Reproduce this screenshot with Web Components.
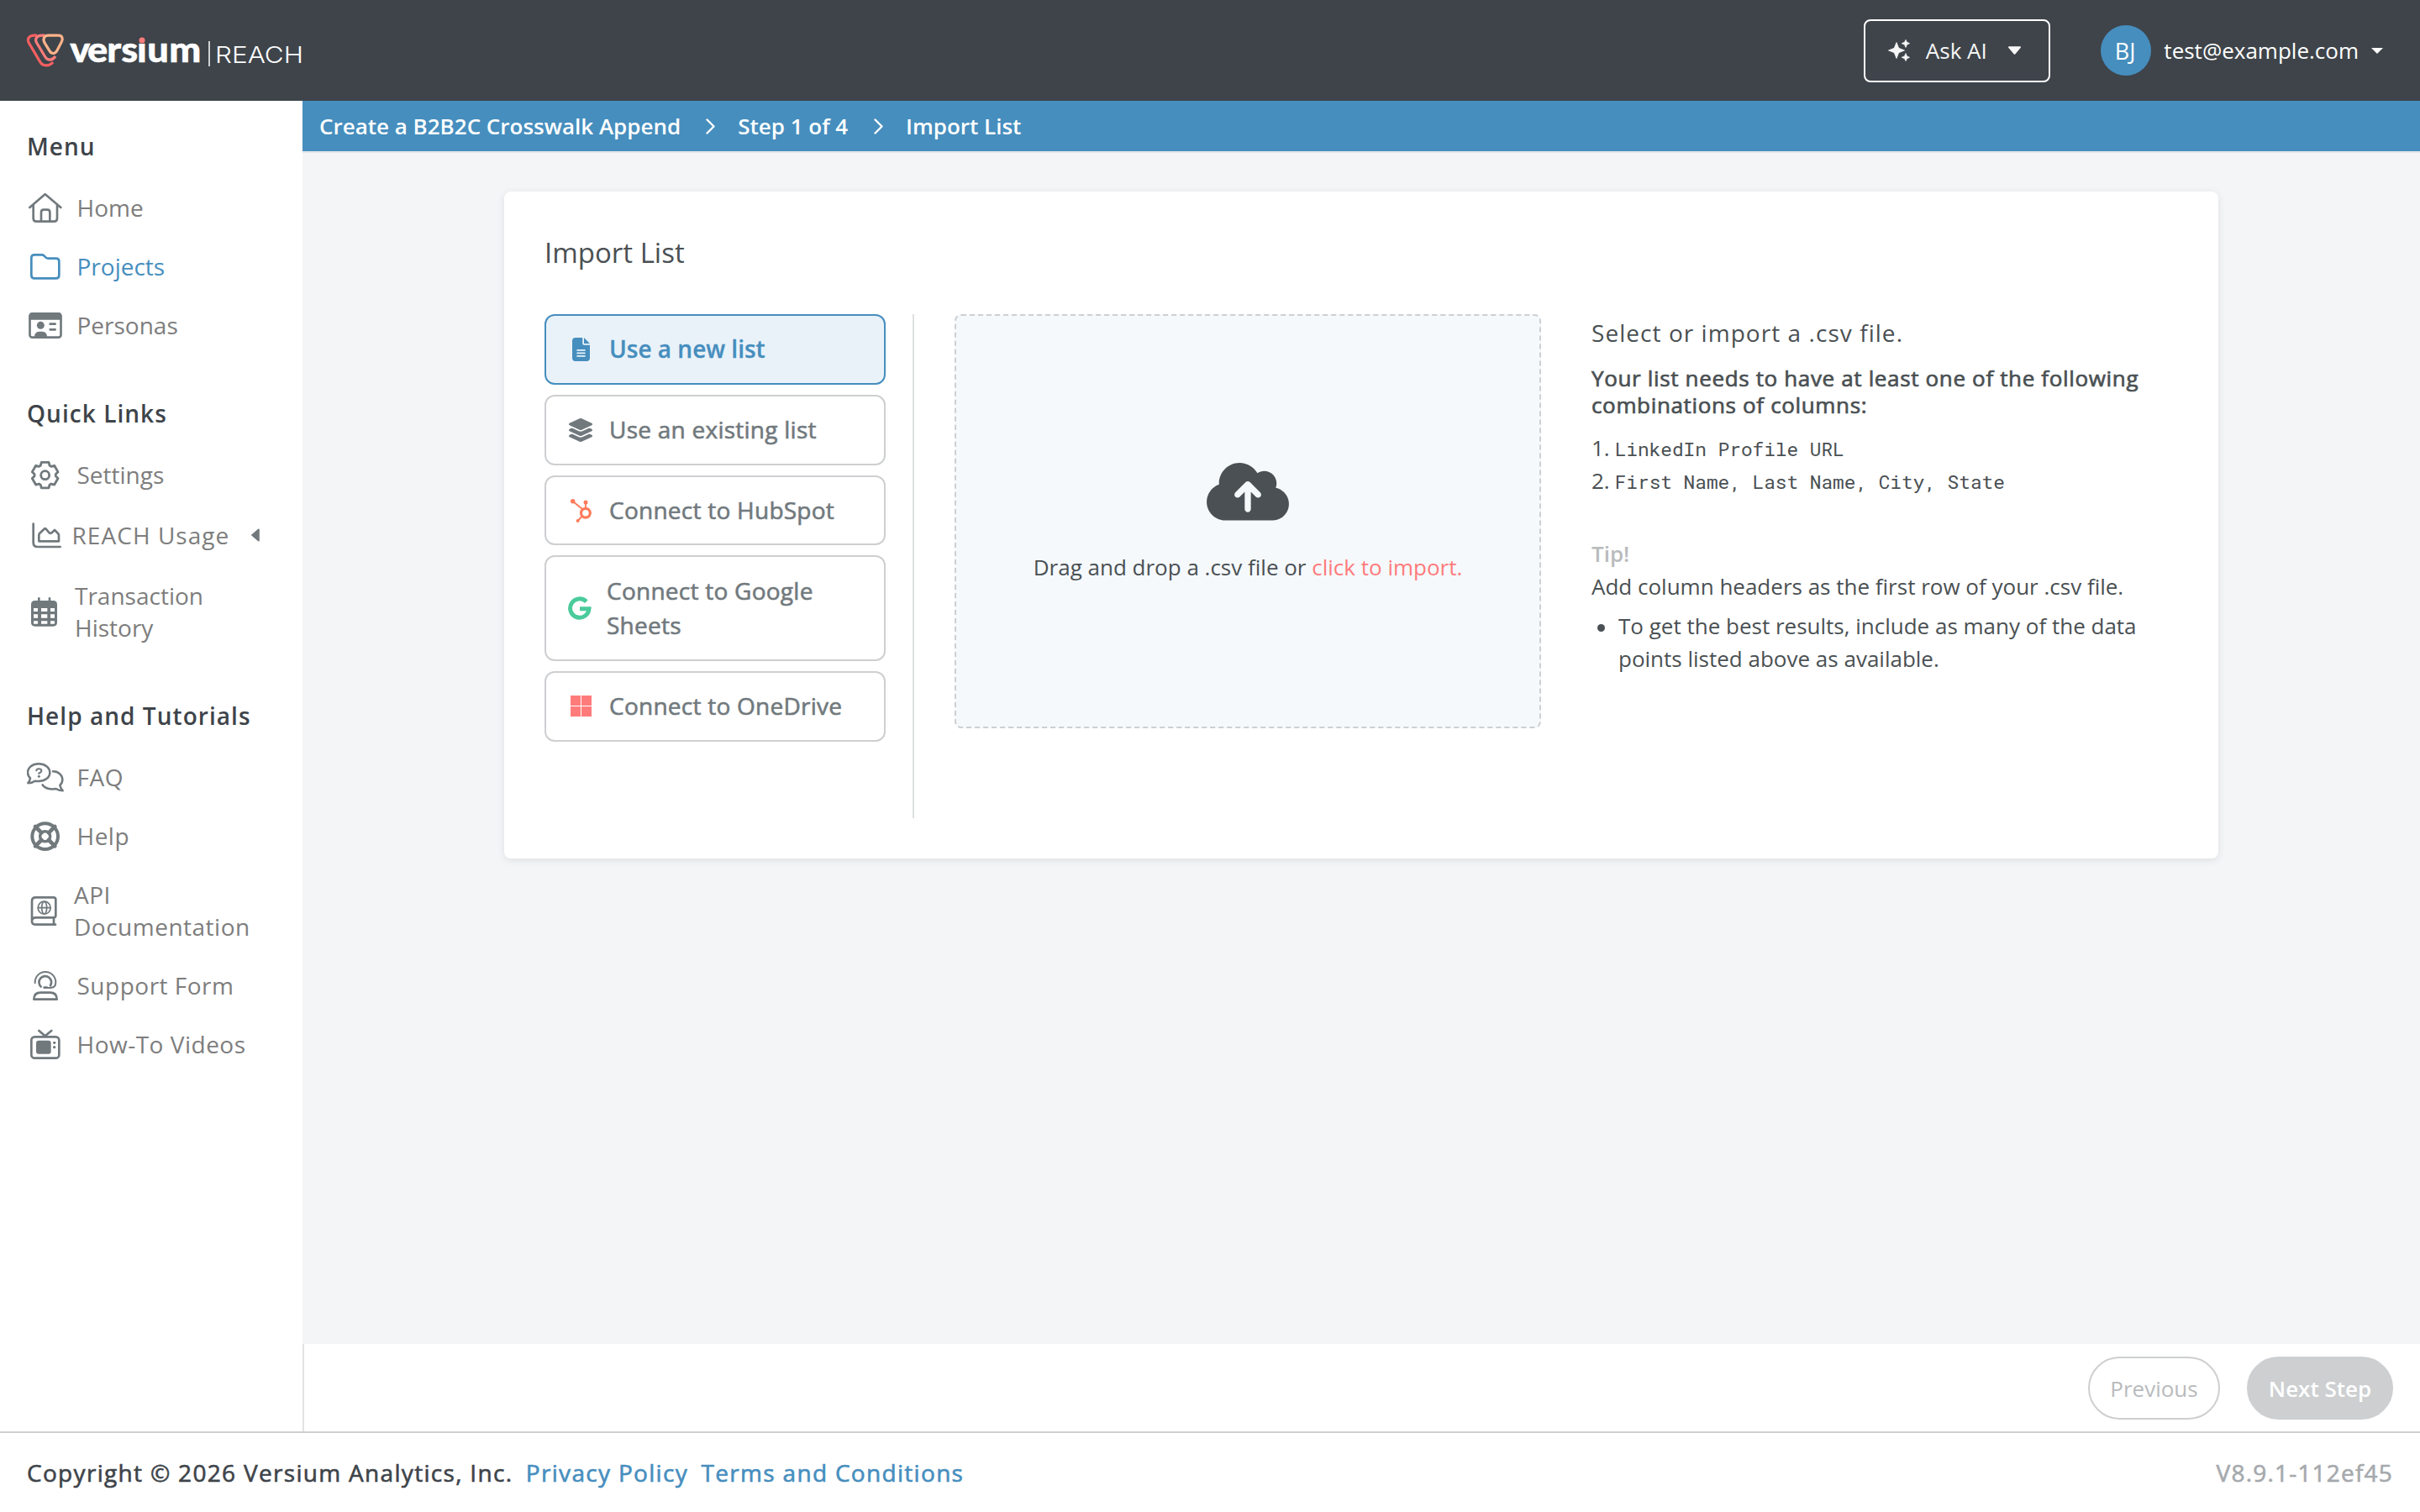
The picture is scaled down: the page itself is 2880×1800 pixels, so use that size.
<!DOCTYPE html>
<html lang="en">
<head>
<meta charset="utf-8">
<title>Import List</title>
<style>
html,body{margin:0;height:100%}
body{font-family:"Open Sans",sans-serif;color:#4a5053;background:#f4f5f7;overflow:hidden}
</style>
</head>
<body>
<reach-app></reach-app>
<script>
const gear=(cx,cy)=>{let p=[];for(let i=0;i<6;i++){const t=-90+i*60;for(const [d,r] of [[-25,38],[-16,47.5],[16,47.5],[25,38]]){const a=(t+d)*Math.PI/180;p.push((cx+r*Math.cos(a)).toFixed(1)+' '+(cy+r*Math.sin(a)).toFixed(1));}}return 'M'+p.join('L')+'Z';};
const ICONS={
home:['96 675 132 132','<g fill="none" stroke="currentColor" stroke-width="8" stroke-linecap="round" stroke-linejoin="round"><path d="M106 741L158 696Q161 693 164 696L217 741M119 733V780Q119 791 130 791H193Q204 791 204 780V733M147 790V758Q147 749 156 749H169Q178 749 178 758V790"/></g>'],
folder:['96 885 132 132','<path fill="none" stroke="currentColor" stroke-width="8" stroke-linejoin="round" d="M123 910H149Q154 910 157 913L164 920Q167 923 172 923H200Q211 923 211 934V983Q211 994 200 994H123Q112 994 112 983V921Q112 910 123 910Z"/>'],
persona:['96 1095 132 132','<rect x="106.500" y="1120" width="111" height="85" rx="9" fill="none" stroke="currentColor" stroke-width="8"/><path fill="currentColor" d="M104 1142V1128Q104 1117 115 1117H209Q220 1117 220 1128V1142ZM123 1205Q123 1184 140 1184H151Q168 1184 168 1205Z"/><circle cx="145" cy="1162" r="13.500" fill="currentColor"/><path d="M179 1157H197M179 1177H197" stroke="currentColor" stroke-width="8" stroke-linecap="round"/>'],
gear:['96 309 132 132','<g fill="none" stroke="currentColor" stroke-width="8.500" stroke-linejoin="round"><path d="'+gear(161,377)+'"/><circle cx="161" cy="377" r="15"/></g>'],
chart:['96 525 132 132','<g fill="none" stroke="currentColor" stroke-width="8" stroke-linecap="round" stroke-linejoin="round"><path d="M119 551V618Q119 633 134 633H215M139 591V613H210V592Q210 588 207 585L195 573L183 584Q179 586 176 583L164 569Q161 566 158 569L142 584Q139 587 139 591Z"/></g>'],
calendar:['96 798 132 132','<path fill="currentColor" fill-rule="evenodd" d="M125 825H190Q204 825 204 839V903Q204 917 190 917H125Q111 917 111 903V839Q111 825 125 825ZM120 852V864H135V852ZM147 852V864H169V852ZM180 852V864H195V852ZM120 874V887H135V874ZM147 874V887H169V874ZM180 874V887H195V874ZM120 898V908H135V898ZM147 898V908H169V898ZM180 898V908H195V898Z"/><path d="M139 817V830M177 817V830" stroke="currentColor" stroke-width="8" stroke-linecap="round"/>'],
faq:['96 279 132 132','<g fill="none" stroke="currentColor" stroke-width="7.500" stroke-linecap="round" stroke-linejoin="round"><path d="M108 349C102 343 99 336 99 329C99 311 116 298 138 298C160 298 178 311 178 329C178 347 160 360 138 360C133 360 129 360 125 359Q114 367 100 367Q107 358 108 349Z"/><path d="M189 325C210 325 223 340 223 355C223 363 220 369 214 375Q217 386 224 394Q209 393 200 387C180 391 160 386 152 373"/></g><path d="M130 322Q131 316 138 316Q148 316 148 323Q148 328 139 331V333" fill="none" stroke="currentColor" stroke-width="6" stroke-linecap="round" stroke-linejoin="round"/><circle cx="139" cy="343" r="4.500" fill="currentColor"/>'],
help:['96 489 132 132','<g fill="none" stroke="currentColor"><circle cx="161" cy="557" r="46" stroke-width="12"/><circle cx="161" cy="557" r="18" stroke-width="10.500"/><path d="M126 522L148 544M196 522L174 544M126 592L148 570M196 592L174 570" stroke-width="14" stroke-linecap="round"/></g>'],
book:['96 756 132 132','<g fill="none" stroke="currentColor" stroke-linecap="round" stroke-linejoin="round"><path stroke-width="8" d="M114 862V788Q114 775 127 775H191Q199 775 199 783V839Q199 847 191 847H128Q114 847 114 860Q114 872 128 872H198M192 848V871"/><g stroke-width="5"><circle cx="158" cy="812" r="22.500"/><ellipse cx="158" cy="812" rx="9" ry="22"/><path d="M136 812H180"/></g></g>'],
support:['96 1023 132 132','<g fill="none" stroke="currentColor" stroke-linecap="round" stroke-linejoin="round"><path stroke-width="6" d="M125 1081V1078A37 37 0 0 1 199 1078Q199 1098 180 1098H166"/><path stroke-width="8" d="M146 1094A22 22 0 1 1 180 1090M158 1097H167M121 1139Q121 1115 145 1115H179Q203 1115 203 1139Z"/></g>'],
tv:['96 1233 132 132','<g fill="none" stroke="currentColor" stroke-width="8" stroke-linecap="round"><rect x="112" y="1273" width="99" height="76" rx="12"/><path d="M139 1251L161 1270L184 1251"/></g><rect x="129" y="1286" width="53" height="48" rx="9" fill="currentColor"/><circle cx="194" cy="1294" r="5" fill="currentColor"/><circle cx="194" cy="1310" r="5" fill="currentColor"/>'],
file:['0 0 384 512','<path fill="currentColor" fill-rule="evenodd" d="M64 0C28.700 0 0 28.700 0 64V448c0 35.300 28.700 64 64 64H320c35.300 0 64-28.700 64-64V160H256c-17.700 0-32-14.300-32-32V0H64zM256 0V128H384L256 0zM112 256H272a16 16 0 0 1 0 32H112a16 16 0 0 1 0-32zM112 320H272a16 16 0 0 1 0 32H112a16 16 0 0 1 0-32zM112 384H272a16 16 0 0 1 0 32H112a16 16 0 0 1 0-32z"/>'],
layers:['32 0 512 512','<path fill="currentColor" d="M264.500 5.200c14.900-6.900 32.100-6.900 47 0l218.600 101c8.500 3.900 13.900 12.400 13.900 21.800s-5.400 17.900-13.900 21.800l-218.600 101c-14.900 6.900-32.100 6.900-47 0L45.900 149.800C37.400 145.800 32 137.300 32 128s5.400-17.900 13.900-21.800L264.500 5.200zM476.900 209.600l53.200 24.600c8.500 3.900 13.900 12.400 13.900 21.800s-5.400 17.900-13.900 21.800l-218.600 101c-14.900 6.900-32.100 6.900-47 0L45.900 277.800C37.400 273.800 32 265.300 32 256s5.400-17.900 13.900-21.800l53.200-24.600 152 70.200c23.400 10.800 50.400 10.800 73.800 0l152-70.200zm-152 198.200l152-70.200 53.200 24.600c8.500 3.900 13.900 12.400 13.900 21.800s-5.400 17.900-13.900 21.800l-218.600 101c-14.900 6.900-32.100 6.900-47 0L45.900 405.800C37.400 401.800 32 393.300 32 384s5.400-17.900 13.900-21.800l53.200-24.600 152 70.200c23.400 10.800 50.400 10.800 73.800 0z"/>'],
hubspot:['0 0 25 28','<g fill="none" stroke="#ff7a59"><circle cx="17.900" cy="16.700" r="5.400" stroke-width="3.200"/><path stroke-width="1.900" d="M2.600 2.700L14 12M17.900 11.500V4M14 20.500L8.500 26"/></g><g fill="#ff7a59"><circle cx="2.700" cy="2.700" r="2.700"/><circle cx="18" cy="4" r="2.500"/><circle cx="8.600" cy="26" r="2"/></g>'],
google:['0 0 28 28','<path fill="none" stroke="#4bcb9b" stroke-width="5" d="M21.800 6.200A11.200 11.200 0 1 0 25 14.700H14"/>'],
windows:['0 0 25 25','<path fill="#ff7b7b" d="M0 0H12V12H0ZM13 0H25V12H13ZM0 13H12V25H0ZM13 13H25V25H13Z"/>'],
cloud:['0 32 640 448','<path fill="currentColor" d="M144 480C64.500 480 0 415.500 0 336c0-62.800 40.200-116.200 96.200-135.900c-.1-2.700-.2-5.400-.2-8.100c0-88.400 71.600-160 160-160c59.300 0 111 32.200 138.700 80.200C409.900 102 428.300 96 448 96c53 0 96 43 96 96c0 12.200-2.300 23.800-6.400 34.600C596 238.400 640 290.100 640 352c0 70.700-57.300 128-128 128H144zm79-217c-9.400 9.400-9.400 24.600 0 33.900s24.600 9.400 33.900 0l39-39V392c0 13.300 10.700 24 24 24s24-10.700 24-24V257.900l39 39c9.400 9.400 24.600 9.400 33.900 0s9.400-24.600 0-33.900l-80-80c-9.400-9.400-24.600-9.400-33.900 0l-80 80z"/>'],
sparkles:['0 0 26 26','<path fill="currentColor" d="M10 3.500L12.700 10.300L19.500 13L12.700 15.700L10 22.500L7.300 15.700L0.500 13L7.300 10.300ZM21 .4L22.400 3.300L25.500 4.700L22.400 6.100L21 9.400L19.600 6.100L16.200 4.700L19.600 3.300ZM21 16.600L22.400 19.900L25.500 21.300L22.400 22.700L21 25.600L19.600 22.700L16.200 21.300L19.600 19.900Z" stroke="currentColor" stroke-width=".8" stroke-linejoin="round"/>'],
caret:['0 0 16 10','<path fill="currentColor" stroke="currentColor" stroke-width="2" stroke-linejoin="round" d="M1.500 1.200H14.500L8 8.800Z"/>'],
caretSharp:['0 0 14 7','<path fill="currentColor" d="M0 0H14L7 7Z"/>'],
caretLeft:['0 0 10 16','<path fill="currentColor" stroke="currentColor" stroke-width="2" stroke-linejoin="round" d="M8.800 1.500V14.500L1.200 8Z"/>'],
chevron:['0 0 11 19','<path fill="none" stroke="currentColor" stroke-width="2.400" stroke-linecap="round" stroke-linejoin="round" d="M1.500 1.500L9.500 9.500L1.500 17.500"/>']
};
function define(name,html){
  customElements.define(name,class extends HTMLElement{
    constructor(){super();this.attachShadow({mode:'open'}).innerHTML=typeof html==='function'?html(this):html;}
  });
}
customElements.define('ui-icon',class extends HTMLElement{
  connectedCallback(){
    if(this.shadowRoot)return;
    const [box,body]=ICONS[this.getAttribute('name')];
    this.attachShadow({mode:'open'}).innerHTML='<style>:host{display:block;flex:none}svg{display:block;width:100%;height:100%}</style><svg viewBox="'+box+'">'+body+'</svg>';
  }
});
define('brand-logo',`<style>:host{display:block;width:340px;height:76px}svg{display:block;overflow:visible}</style>
<svg width="340" height="76" viewBox="32 22 340 76">
<g transform="scale(.33333)" fill="none" stroke-width="9.500">
<path stroke="#f75f60" d="M132 126.500H122C103 126.500 96 140 103 153L143 221C152 237 176 238 189 222"/>
<path stroke="#ff7b7b" d="M160 126.500H150C131 126.500 123 140 131 153L162 204C170 217 187 217 198 201"/>
<path stroke="#ffb38a" d="M172 126.500H208C222 126.500 226 138 220 149L204 180C197 193 184 194 177 182L160 154C151 139 158 126.500 172 126.500Z"/></g>
<text transform="scale(1.1 1)" x="75.700 94.600 115.800 131.200 148.200 159.300 183" y="74" fill="#fff" stroke="#fff" stroke-width=".5" stroke-linejoin="round" font-family="Lato,sans-serif" font-weight="900" font-size="41">versium</text>
<circle cx="169.200" cy="46.300" r="6" fill="#3e444a"/><circle cx="169" cy="48" r="3.500" fill="#ff7b7b"/>
<path d="M249 49V79" stroke="#fff" stroke-width="1.500"/>
<text x="256" y="74.500" fill="#fff" font-family="Inter,sans-serif" font-weight="300" font-size="27.500" textLength="105" lengthAdjust="spacingAndGlyphs">REACH</text>
</svg>`);
define('app-header',`<style>:host{display:flex;box-sizing:border-box;height:120px;background:#3e444a;align-items:center;padding:0 44px 0 32px;color:#fff;font-size:26px}
.ask{margin-left:auto;box-sizing:border-box;width:222px;height:75px;border:2px solid #fff;border-radius:8px;display:flex;align-items:center;padding-left:27px;color:#f7f7f7}
.ask span{margin-left:19px;white-space:nowrap}.av{width:60px;height:60px;border-radius:50%;background:#468ebe;display:flex;align-items:center;justify-content:center;margin:0 15.500px 0 60px}.av span{font-size:27px;margin-right:1.500px}</style>
<brand-logo></brand-logo><div class="ask"><ui-icon name="sparkles" style="width:26px;height:26px"></ui-icon><span>Ask AI</span><ui-icon name="caret" style="width:17px;height:10px;margin-left:24px"></ui-icon></div>
<div class="av"><span>BJ</span></div><span>test@example.com</span><ui-icon name="caretSharp" style="width:14px;height:7px;margin-left:15px"></ui-icon>`);
define('nav-section',`<style>:host{display:block;margin-top:50.5px}h2{margin:0 0 19.5px;font:600 28px/38px "Open Sans",sans-serif;letter-spacing:1.05px;color:#3e444a}</style><h2><slot name="title"></slot></h2><slot></slot>`);
define('nav-item',el=>`<style>:host{display:flex;align-items:center;padding:16px 0;color:#71797d;--gap:15.500px;white-space:nowrap}
span{margin-left:var(--gap);font-size:28px;line-height:38px;color:#7d7d7d;letter-spacing:var(--track,0)}:host([wide]) span{letter-spacing:1.05px}:host([active]),:host([active]) span{color:#468ebe}</style>
<ui-icon style="width:44px;height:44px;margin:-3px 0" name="${el.getAttribute('icon')}"></ui-icon><span><slot></slot></span><slot name="end"></slot>`);
define('app-sidebar',`<style>:host{display:block;box-sizing:border-box;width:360px;flex:none;background:#fff;padding:34.5px 32px 0}nav-section:first-of-type{margin-top:0}</style>
<nav-section><b slot="title" style="font-weight:600">Menu</b><nav-item icon="home">Home</nav-item><nav-item icon="folder" active>Projects</nav-item><nav-item icon="persona">Personas</nav-item></nav-section>
<nav-section><b slot="title" style="font-weight:600">Quick Links</b><nav-item icon="gear">Settings</nav-item><nav-item icon="chart" wide style="--gap:9.500px;margin:2px 0">REACH Usage<ui-icon slot="end" name="caretLeft" style="width:10px;height:16px;margin-left:25.500px"></ui-icon></nav-item><nav-item icon="calendar" style="--gap:13px">Transaction<br>History</nav-item></nav-section>
<nav-section style="--track:.5px"><b slot="title" style="font-weight:600">Help and Tutorials</b><nav-item icon="faq">FAQ</nav-item><nav-item icon="help">Help</nav-item><nav-item icon="book" style="--gap:12px">API<br>Documentation</nav-item><nav-item icon="support">Support Form</nav-item><nav-item icon="tv">How-To Videos</nav-item></nav-section>`);
define('app-breadcrumb',`<style>:host{display:flex;box-sizing:border-box;height:62px;border-bottom:2px solid #e3e5e7;background:#468ebe;color:#fff;font-size:26px;font-weight:600;align-items:center;padding-left:20px}ui-icon{width:11px;height:19px;margin:0 27px 0 30px}.s{margin-right:.8px}</style>
<span>Create a B2B2C Crosswalk Append</span><ui-icon name="chevron"></ui-icon><span class="s">Step 1 of 4</span><ui-icon name="chevron"></ui-icon><span>Import List</span>`);
define('source-option',el=>`<style>:host{display:flex;box-sizing:border-box;align-items:center;border:2px solid #cdcfd1;border-radius:12px;padding:19.400px 0 18.900px 25px;margin-bottom:11.900px;color:#71797d;font-size:28px;line-height:41.600px}
span{margin-left:18px;letter-spacing:.25px;-webkit-text-stroke:.6px currentColor}
:host([active]){background:#eaf2f9;border-color:#468ebe;color:#468ebe;font-weight:600}:host([active]) span{letter-spacing:0;-webkit-text-stroke:.3px currentColor}.i{width:32px;display:flex;justify-content:center}:host([two]) .i{width:30px}:host([two]) span{margin-left:17px}</style>
<div class="i"><ui-icon name="${el.getAttribute('icon')}" style="width:${el.getAttribute('w')}px;height:${el.getAttribute('h')}px"></ui-icon></div><span><slot></slot></span>`);
define('drop-zone',`<style>:host{display:flex;box-sizing:border-box;width:698px;height:493px;border:2px dashed #cdcfd1;border-radius:8px;background:#f5f9fc;flex-direction:column;align-items:center;padding-top:175px;font-size:26px;line-height:39px;margin-left:48px}ui-icon{width:98px;height:68.500px;margin-bottom:36px}a{color:#ff7b7b}</style>
<ui-icon name="cloud"></ui-icon><div>Drag and drop a .csv file or <a>click to import.</a></div>`);
define('import-info',`<style>:host{display:block;margin-left:60px;padding-top:3px;font-size:26px;line-height:39px;white-space:nowrap}h3{margin:0;font-weight:400;font-size:28px;line-height:38px;letter-spacing:1.05px}h4{margin:19px 0 15px;font-weight:400;font-size:26px;line-height:32px;letter-spacing:.65px;-webkit-text-stroke:.7px currentColor}
.n{display:flex;align-items:baseline;height:39.300px;padding-top:.5px;margin-bottom:-.5px}code{font:22.750px/39px "Roboto Mono","DejaVu Sans Mono",monospace;margin-left:6px}.tip{margin-top:48px;color:#b9bbbd;font-weight:600}.b{display:flex;margin-top:8px}.dot{flex:none;width:9px;height:9px;border-radius:50%;background:#4a5053;margin:17px 16px 0 7px}</style>
<h3>Select or import a .csv file.</h3><h4>Your list needs to have at least one of the following<br>combinations of columns:</h4>
<div class="n"><span>1.</span><code>LinkedIn Profile URL</code></div><div class="n"><span>2.</span><code>First Name, Last Name, City, State</code></div>
<div class="tip">Tip!</div><div>Add column headers as the first row of your .csv file.</div><div class="b"><i class="dot"></i><div>To get the best results, include as many of the data<br>points listed above as available.</div></div>`);
define('import-card',`<style>:host{display:block;box-sizing:border-box;width:2040px;height:794px;margin:46px auto 0;background:#fff;border-radius:8px;padding:48px;box-shadow:0 2px 8px rgba(62,68,74,.12)}h1{margin:0 0 49px;font-weight:400;font-size:33px;line-height:49px}.row{display:flex}.opts{box-sizing:border-box;width:440px;height:600px;padding-right:32px;border-right:2px solid #dedfe0}</style>
<h1>Import List</h1><div class="row"><div class="opts">
<source-option icon="file" w="21" h="28" active>Use a new list</source-option><source-option icon="layers" w="28" h="28">Use an existing list</source-option><source-option icon="hubspot" w="25" h="28">Connect to HubSpot</source-option><source-option icon="google" w="28" h="28" two>Connect to Google<br>Sheets</source-option><source-option icon="windows" w="25" h="25">Connect to OneDrive</source-option></div><drop-zone></drop-zone><import-info></import-info></div>`);
define('pill-button',`<style>:host{display:flex;box-sizing:border-box;align-items:center;justify-content:center;height:75px;border-radius:38px;border:2px solid #cdcfd1;color:#b9bbbd;font-size:26px}:host([solid]){background:#cdcfd1;color:#fff;font-weight:600}</style><slot></slot>`);
define('action-bar',`<style>:host{display:flex;box-sizing:border-box;height:104px;background:#fff;border-left:2px solid #e2e3e4;justify-content:flex-end;gap:32px;padding:15px 32px 0 0;margin-top:auto}</style><pill-button style="width:157px">Previous</pill-button><pill-button solid style="width:174px">Next Step</pill-button>`);
define('app-footer',`<style>:host{display:flex;box-sizing:border-box;height:96px;background:#fff;border-top:2px solid #cdcfd1;padding:0 32px;align-items:center;font-size:28px;letter-spacing:1.31px;color:#3e444a}span,a{-webkit-text-stroke:.6px currentColor}a{color:#468ebe;margin-left:15.500px}.v{margin-left:auto;color:#a5a9ad;letter-spacing:1.2px}</style>
<span>Copyright © 2026 Versium Analytics, Inc.</span><a>Privacy Policy</a><a>Terms and Conditions</a><span class="v">V8.9.1-112ef45</span>`);
define('reach-app',`<style>:host{display:flex;flex-direction:column;width:2880px;height:1800px}.body{display:flex;flex:1;min-height:0}main{flex:1;display:flex;flex-direction:column;background:#f4f5f7;min-width:0}</style>
<app-header></app-header><div class="body"><app-sidebar></app-sidebar><main><app-breadcrumb></app-breadcrumb><import-card></import-card><action-bar></action-bar></main></div><app-footer></app-footer>`);
</script>
</body>
</html>
